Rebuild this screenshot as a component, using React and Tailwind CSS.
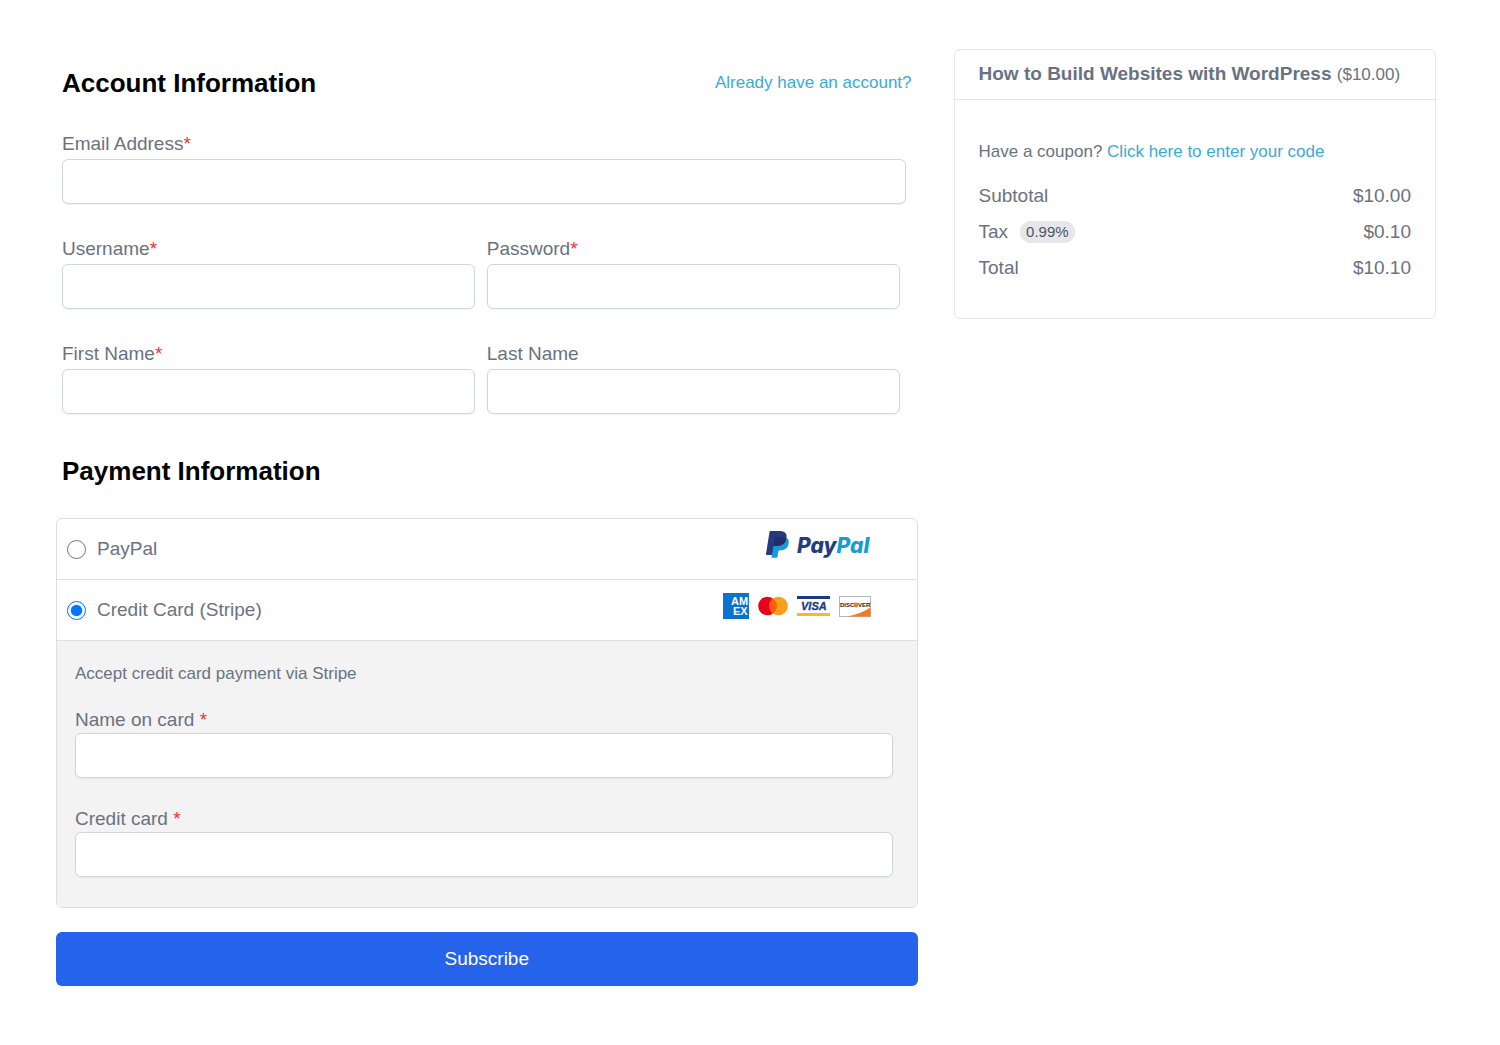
import React from "react";

function Field({ id, label, type = "text", required, spaced, compact, className = "" }) {
  return (
    <div className={`flex flex-col ${className}`}>
      <label htmlFor={id} className={compact ? "leading-[26px]" : "leading-[30px]"}>
        {label}
        {spaced && " "}
        {required && <span className="text-red-500">*</span>}
      </label>
      <input
        id={id}
        type={type}
        required={required}
        className="h-[45px] w-full rounded-md border border-gray-300 bg-white px-3 shadow-xs outline-none focus:border-blue-500"
      />
    </div>
  );
}

function PayPalLogo() {
  return (
    <svg role="img" aria-label="PayPal" width="105" height="28" viewBox="0 0 105 28">
      <g transform="scale(0.89)">
        <path fill="#253B80" d="M7.266 29.154l.523-3.322-1.165-.027H1.061L4.927 1.292a.316.316 0 0 1 .314-.268h9.38c3.114 0 5.263.648 6.385 1.927.526.6.861 1.227 1.023 1.917.17.724.173 1.589.007 2.644l-.012.077v.676l.526.298a3.69 3.69 0 0 1 1.065.812c.45.513.741 1.165.864 1.938.127.795.085 1.741-.123 2.812-.24 1.232-.628 2.305-1.152 3.183a6.547 6.547 0 0 1-1.825 2c-.696.494-1.523.869-2.458 1.109-.906.236-1.939.355-3.072.355h-.73c-.522 0-1.029.188-1.427.525a2.21 2.21 0 0 0-.744 1.328l-.055.299-.924 5.855-.042.215c-.011.068-.03.102-.058.125a.155.155 0 0 1-.096.035H7.266z" />
        <path fill="#179BD7" d="M23.048 7.667c-.028.179-.06.362-.096.55-1.237 6.351-5.469 8.545-10.874 8.545H9.326c-.661 0-1.218.48-1.321 1.132L6.596 26.83l-.399 2.533a.704.704 0 0 0 .695.814h4.881c.578 0 1.069-.42 1.16-.99l.048-.248.919-5.832.059-.32c.09-.572.582-.992 1.16-.992h.73c4.729 0 8.431-1.92 9.513-7.476.452-2.321.218-4.259-.978-5.622a4.667 4.667 0 0 0-1.336-1.03z" />
        <path fill="#222D65" d="M21.754 7.151a9.757 9.757 0 0 0-1.203-.267 15.284 15.284 0 0 0-2.426-.177h-7.352a1.172 1.172 0 0 0-1.159.992L8.05 17.605l-.045.289a1.336 1.336 0 0 1 1.321-1.132h2.752c5.405 0 9.637-2.195 10.874-8.545.037-.188.068-.371.096-.55a6.594 6.594 0 0 0-1.017-.429 9.045 9.045 0 0 0-.277-.087z" />
        <path fill="#253B80" d="M9.614 7.699a1.169 1.169 0 0 1 1.159-.991h7.352c.871 0 1.684.057 2.426.177a9.757 9.757 0 0 1 1.481.353c.365.121.704.264 1.017.429.368-2.347-.003-3.945-1.272-5.392C20.378.682 17.853 0 14.622 0h-9.38c-.66 0-1.223.48-1.325 1.133L.01 25.898a.806.806 0 0 0 .795.932h5.791l1.454-9.225 1.564-9.906z" />
      </g>
      <text x="31" y="22" fontFamily="Inter, sans-serif" fontSize="21" fontWeight="800" fontStyle="italic" fill="#253B80">
        Pay<tspan fill="#179BD7">Pal</tspan>
      </text>
    </svg>
  );
}

function AmexLogo() {
  return (
    <svg role="img" aria-label="American Express" width="26" height="26" viewBox="0 0 26 26">
      <rect width="26" height="26" fill="#0a72cf" />
      <g fontFamily="'Liberation Sans', sans-serif" fontSize="11" fontWeight="700" fill="#fff">
        <text x="8" y="12">AM</text>
        <text x="10" y="22">EX</text>
      </g>
    </svg>
  );
}

function MastercardLogo() {
  return (
    <svg role="img" aria-label="Mastercard" width="30" height="20" viewBox="0 0 30 20">
      <circle cx="9.500" cy="10" r="9.300" fill="#eb001b" />
      <circle cx="20.500" cy="10" r="9.300" fill="#f79e1b" />
      <path d="M15 2.500a9.300 9.300 0 0 1 0 15 9.300 9.300 0 0 1 0-15z" fill="#ff5f00" />
    </svg>
  );
}

function VisaLogo() {
  return (
    <svg role="img" aria-label="Visa" width="33" height="21" viewBox="0 0 33 21">
      <rect y="0" width="33" height="3" fill="#1a3a7c" />
      <rect y="17" width="33" height="3" fill="#fdb52a" />
      <text x="4" y="14" fontFamily="'Liberation Sans', sans-serif" fontSize="11" fontWeight="700" fontStyle="italic" fill="#1a3a7c" stroke="#1a3a7c" strokeWidth="0.300">
        VISA
      </text>
    </svg>
  );
}

function DiscoverLogo() {
  return (
    <svg role="img" aria-label="Discover" width="32" height="21" viewBox="0 0 32 21">
      <rect x="0.500" y="0.500" width="31" height="20" fill="#fff" stroke="#b4b7ba" />
      <path d="M31.500 11.500V20.500H8c9-1.500 17-5 23.500-9z" fill="#f47b20" />
      <g fontFamily="'Liberation Sans', sans-serif" fontSize="6" fontWeight="700" fill="#222">
        <text x="1" y="11">DISC</text>
        <text x="19" y="11">VER</text>
      </g>
      <circle cx="17" cy="9" r="2.400" fill="#f47b20" />
    </svg>
  );
}

function MethodRow({ id, label, defaultChecked, children }) {
  return (
    <div className="flex h-[61px] items-center justify-between border-b border-[#dedede] pl-[10px] pr-[46px]">
      <label htmlFor={id} className="flex items-center gap-[11px]">
        <input id={id} type="radio" name="method" defaultChecked={defaultChecked} className="size-[19px]" />
        {label}
      </label>
      <div className="flex items-center gap-[9px] pb-2">{children}</div>
    </div>
  );
}

function SummaryRow({ label, badge, value }) {
  return (
    <div className="flex h-9 items-center justify-between">
      <dt className="flex items-center gap-3">
        {label}
        {badge && (
          <span className="rounded-full bg-gray-200 px-[6px] text-[15px] leading-[22px] text-gray-600">{badge}</span>
        )}
      </dt>
      <dd>{value}</dd>
    </div>
  );
}

export default function App() {
  return (
    <div className="min-h-screen bg-white pb-14 pl-14 pr-16 pt-[49px] font-['Liberation_Sans',Arial,sans-serif] text-[19px] text-gray-500">
      <div className="grid grid-cols-[25fr_14fr] items-start gap-9">
        <form className="pt-[18px]" onSubmit={(e) => e.preventDefault()}>
          <section className="px-[6px]">
            <div className="flex items-center justify-between">
              <h2 className="text-[26px] font-bold leading-8 text-black">Account Information</h2>
              <a href="#login" className="text-[17px] leading-6 text-[#3aabd4]">
                Already have an account?
              </a>
            </div>
            <Field id="email" type="email" label="Email Address" required className="mr-[6px] mt-[30px]" />
            <div className="mr-3 mt-[30px] grid grid-cols-2 gap-x-3 gap-y-[30px]">
              <Field id="username" label="Username" required />
              <Field id="password" type="password" label="Password" required />
              <Field id="first-name" label="First Name" required />
              <Field id="last-name" label="Last Name" />
            </div>
            <h2 className="mt-[41px] text-[26px] font-bold leading-8 text-black">Payment Information</h2>
          </section>

          <section className="mt-[31px] overflow-hidden rounded-md border border-[#dedede]">
            <MethodRow id="paypal" label="PayPal">
              <PayPalLogo />
            </MethodRow>
            <MethodRow id="stripe" label="Credit Card (Stripe)" defaultChecked>
              <AmexLogo />
              <MastercardLogo />
              <VisaLogo />
              <DiscoverLogo />
            </MethodRow>
            <div className="bg-[#f3f3f3] pb-[30px] pl-[18px] pr-6 pt-[21px]">
              <p className="text-[17px] leading-6">Accept credit card payment via Stripe</p>
              <Field id="card-name" label="Name on card" required spaced compact className="mt-[21px]" />
              <Field id="card-number" label="Credit card" required spaced compact className="mt-7" />
            </div>
          </section>

          <button type="submit" className="mt-6 h-[54px] w-full rounded-md bg-[#2563eb] text-white">
            Subscribe
          </button>
        </form>

        <aside className="rounded-md border border-gray-200">
          <h3 className="border-b border-gray-200 px-6 font-bold leading-[48px]">
            How to Build Websites with WordPress <span className="text-[17px] font-normal">($10.00)</span>
          </h3>
          <div className="px-6 pb-8 pt-10">
            <p className="text-[17px] leading-6">
              Have a coupon?{" "}
              <a href="#coupon" className="text-[#3aabd4]">
                Click here to enter your code
              </a>
            </p>
            <dl className="mt-[14px]">
              <SummaryRow label="Subtotal" value="$10.00" />
              <SummaryRow label="Tax" badge="0.99%" value="$0.10" />
              <SummaryRow label="Total" value="$10.10" />
            </dl>
          </div>
        </aside>
      </div>
    </div>
  );
}
